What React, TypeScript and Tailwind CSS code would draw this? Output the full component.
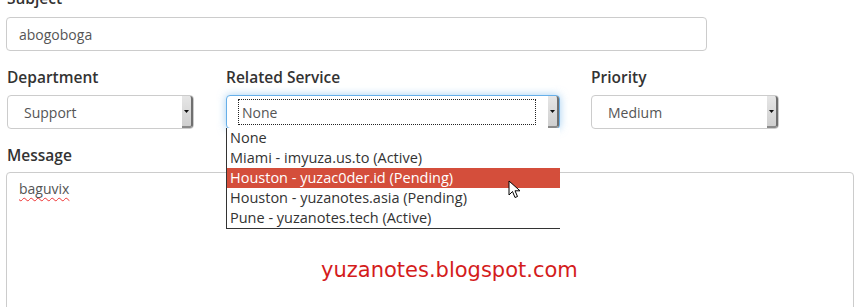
import React from "react";

function Arrow() {
  return (
    <div className="absolute right-0 top-0 bottom-0 w-[11px] flex items-center justify-center bg-gradient-to-b from-[#e6e6e6] to-[#cfcfcf] border-r-2 border-b-2 border-r-[#6f6f6f] border-b-[#8a8a8a] rounded-r-[3px]">
      <svg width="5" height="3" viewBox="0 0 5 3"><polygon points="0,0 5,0 2.5,3" fill="#111" /></svg>
    </div>
  );
}

function Select({ value, w }: { value: string; w: string }) {
  return (
    <div className={`relative h-[34px] border border-[#ccc] rounded-[4px] bg-white flex items-center pl-[16px] text-[14px] text-[#555] ${w}`}>
      <span>{value}</span>
      <Arrow />
    </div>
  );
}

export default function App() {
  const items = [
    "None",
    "Miami - imyuza.us.to (Active)",
    "Houston - yuzac0der.id (Pending)",
    "Houston - yuzanotes.asia (Pending)",
    "Pune - yuzanotes.tech (Active)",
  ];
  return (
    <div className="relative w-[858px] h-[307px] overflow-hidden bg-white" style={{ fontFamily: "'Open Sans', sans-serif" }}>
      <div className="flex flex-col pl-[6px] mt-[-12px]">
        <div className="text-[15.5px] font-semibold text-[#333] leading-[20px] pl-[1px]">Subject</div>
        <div className="mt-[9px] w-[701px] h-[34px] border border-[#ccc] rounded-[4px] flex items-center pl-[12px] text-[14px] text-[#555]">abogoboga</div>
        <div className="flex mt-[16px] pl-[1px]">
          <div className="w-[219px] flex flex-col">
            <div className="text-[15.5px] font-semibold text-[#333] leading-[20px]">Department</div>
            <div className="mt-[8px]"><Select value="Support" w="w-[187px]" /></div>
          </div>
          <div className="w-[365px] flex flex-col">
            <div className="text-[15.5px] font-semibold text-[#333] leading-[20px]">Related Service</div>
            <div className="mt-[8px] relative w-[334px] h-[34px] border border-[#66afe9] rounded-[4px] bg-white shadow-[0_0_8px_rgba(102,175,233,0.6)] flex items-center text-[14px] text-[#555]">
              <div className="ml-[11px] w-[298px] h-[26px] border border-dotted border-[#222] flex items-center pl-[3px]">None</div>
              <Arrow />
            </div>
          </div>
          <div className="flex flex-col">
            <div className="text-[15.5px] font-semibold text-[#333] leading-[20px]">Priority</div>
            <div className="mt-[8px]"><Select value="Medium" w="w-[188px]" /></div>
          </div>
        </div>
        <div className="mt-[16px] text-[15.5px] font-semibold text-[#333] leading-[20px] pl-[1px]">Message</div>
        <div className="mt-[7px] w-[848px] h-[160px] border border-[#ccc] rounded-[4px] pl-[12px] pt-[5px] text-[14px] text-[#555]">
          <span className="underline decoration-wavy decoration-[#e33] decoration-[1px] underline-offset-[3px]">baguvix</span>
        </div>
      </div>

      <div className="absolute left-[226px] top-[128px] w-[334px] bg-white border-l border-b border-[#333] text-[14.5px] text-[#333] leading-[20px]">
        {items.map((t, i) => (
          <div key={i} className={`h-[20px] pl-[3px] ${i === 2 ? "bg-[#d44e3b] text-white" : ""}`}>{t}</div>
        ))}
      </div>

      <svg className="absolute left-[508px] top-[180px]" width="14" height="20" viewBox="0 0 14 20">
        <path d="M1 1 L1 15 L4.5 11.5 L7 17.5 L9.5 16.5 L7 10.8 L12 10.8 Z" fill="#fff" stroke="#000" strokeWidth="1" strokeLinejoin="round" />
      </svg>

      <div className="absolute left-[321px] top-[256px] text-[21px] text-[#d41c1c] leading-[28px]" style={{ fontFamily: "'DejaVu Sans', sans-serif" }}>
        yuzanotes.blogspot.com
      </div>
    </div>
  );
}
